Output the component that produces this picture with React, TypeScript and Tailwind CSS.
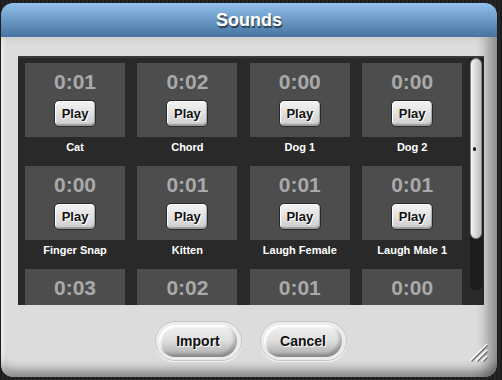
import React from "react";

const sounds = [
  { name: "Cat", time: "0:01" },
  { name: "Chord", time: "0:02" },
  { name: "Dog 1", time: "0:00" },
  { name: "Dog 2", time: "0:00" },
  { name: "Finger Snap", time: "0:00" },
  { name: "Kitten", time: "0:01" },
  { name: "Laugh Female", time: "0:01" },
  { name: "Laugh Male 1", time: "0:01" },
  { name: "Laugh Male 2", time: "0:03" },
  { name: "Meow", time: "0:02" },
  { name: "Owl", time: "0:01" },
  { name: "Pop", time: "0:00" },
];

function SoundTile({ name, time }: { name: string; time: string }) {
  return (
    <div className="flex h-[103px] w-[100px] flex-col">
      <div className="flex h-[74px] flex-col items-center bg-[#4d4d4d] pt-[7px]">
        <span className="text-[21px] font-bold leading-[24px] text-[#a9a9a9]">{time}</span>
        <button className="mt-[6px] h-[27px] w-[42px] rounded-[5px] border border-[#2a2a2a] bg-gradient-to-b from-[#f4f4f4] to-[#cdcdcd] text-[13px] font-bold text-[#111] shadow-[inset_-1px_-2px_1px_rgba(0,0,0,0.25),inset_1px_1px_1px_#fff] [text-shadow:1px_1px_0_#fff]">
          Play
        </button>
      </div>
      <div className="pt-[3px] text-center text-[11px] font-bold leading-[14px] text-white">
        {name}
      </div>
    </div>
  );
}

function PillButton({ label }: { label: string }) {
  return (
    <div className="flex h-[40px] w-[87px] items-center justify-center rounded-full border border-[#c4c4c4] bg-[#ececec] shadow-[0_1px_1px_rgba(255,255,255,0.8)]">
      <button className="h-[32px] w-[78px] rounded-full bg-gradient-to-b from-[#f2f2f2] via-[#dedede] to-[#a8a8a8] text-[14px] font-bold text-[#111] shadow-[inset_-3px_-3px_3px_rgba(0,0,0,0.2),inset_2px_2px_2px_#fff] [text-shadow:1px_1px_0_#fff]">
        {label}
      </button>
    </div>
  );
}

export default function App() {
  return (
    <div className="h-[380px] w-[502px] overflow-hidden bg-[repeating-linear-gradient(90deg,#1d1d1d_0px,#1d1d1d_2px,#262626_2px,#262626_4px)] pl-[1px] pt-[3px] font-['Liberation_Sans',Arial,sans-serif]">
      <div className="flex h-[374px] w-[496px] flex-col overflow-hidden rounded-[12px]">
        <div className="flex h-[34px] shrink-0 items-center justify-center bg-gradient-to-b from-[#92c1ec] to-[#46739f]">
          <span className="text-[18px] font-bold text-white [text-shadow:1px_2px_1px_rgba(0,0,0,0.55)]">
            Sounds
          </span>
        </div>
        <div className="relative flex flex-1 flex-col rounded-b-[12px] bg-[#dcdcdc] shadow-[inset_-14px_0_12px_-4px_rgba(0,0,0,0.32),inset_0_-12px_10px_-4px_rgba(0,0,0,0.32),inset_4px_0_3px_-1px_rgba(255,255,255,0.7)]">
          <div className="ml-[17px] mt-[19px] flex h-[249px] w-[466px] overflow-hidden border-t-2 border-[#3a3a3a] bg-[#292929]">
            <div className="grid flex-1 grid-cols-[repeat(4,100px)] content-start gap-x-[12.4px] pl-[7px] pt-[5px]">
              {sounds.map((s) => (
                <SoundTile key={s.name} name={s.name} time={s.time} />
              ))}
            </div>
            <div className="mr-[1px] flex w-[13px] flex-col">
              <div className="flex h-[232px] flex-col rounded-b-[6px] bg-[#1c1c1c]">
                <div className="relative h-[181px] w-[12px] rounded-full border border-[#888] bg-gradient-to-r from-[#f4f4f4] to-[#bdbdbd]">
                  <span className="absolute left-[2px] top-[88px] h-[4px] w-[3px] rounded-full bg-[#222]" />
                </div>
              </div>
            </div>
          </div>
          <div className="mt-[16px] flex justify-center gap-[18px] pl-[3px]">
            <PillButton label="Import" />
            <PillButton label="Cancel" />
          </div>
          <svg className="absolute bottom-[15px] right-[9px]" width="20" height="19" viewBox="0 0 20 19">
            <g stroke="#ffffff" strokeWidth="1.5">
              <line x1="2" y1="18" x2="19" y2="1" />
              <line x1="8" y1="18" x2="19" y2="7" />
              <line x1="14" y1="18" x2="19" y2="13" />
            </g>
            <g stroke="#6a6a6a" strokeWidth="1.2">
              <line x1="3.5" y1="18.5" x2="19.5" y2="2.5" />
              <line x1="9.5" y1="18.5" x2="19.5" y2="8.5" />
              <line x1="15.5" y1="18.5" x2="19.5" y2="14.5" />
            </g>
          </svg>
        </div>
      </div>
    </div>
  );
}
